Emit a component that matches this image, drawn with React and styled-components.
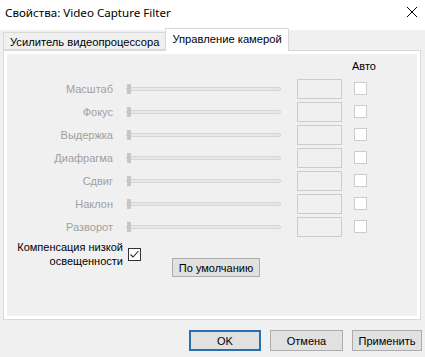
import React from 'react';
import styled, { createGlobalStyle } from 'styled-components';

const GlobalStyle = createGlobalStyle`
  html, body {
    margin: 0;
    padding: 0;
    background: #f0f0f0;
  }
  body {
    font-family: "Liberation Sans", Arial, sans-serif;
    font-size: 11px;
    color: #000;
  }
`;

const Dialog = styled.div`
  width: 425px;
  height: 357px;
  background: #f0f0f0;
  display: flex;
  flex-direction: column;
  overflow: hidden;
`;

const TitleBar = styled.div`
  height: 30px;
  background: #ffffff;
  display: flex;
  align-items: center;
  justify-content: space-between;
  padding: 0 6px 6px 5px;
  box-sizing: border-box;
  font-family: "Noto Sans", "Open Sans", sans-serif;
  font-size: 11.6px;
`;

const CloseBox = styled.div`
  width: 14px;
  height: 14px;
  display: flex;
  align-items: center;
  justify-content: center;
`;

const TabStrip = styled.div`
  height: 21px;
  display: flex;
  align-items: flex-end;
  padding-left: 3px;
  position: relative;
  z-index: 1;
  margin-bottom: -1px;
`;

const Tab = styled.div`
  box-sizing: border-box;
  height: ${p => (p.$active ? '23px' : '18px')};
  padding: ${p => (p.$active ? '4px 6px 0 6px' : '3px 6px 0 6px')};
  background: ${p => (p.$active ? '#ffffff' : '#f0f0f0')};
  border: 1px solid #d9d9d9;
  border-bottom: ${p => (p.$active ? 'none' : '1px solid #d9d9d9')};
  margin-left: ${p => (p.$active ? '-1px' : '0')};
  font-family: "Liberation Sans", Arial, sans-serif;
  font-size: 11.2px;
  line-height: 13px;
  white-space: nowrap;
  margin-bottom: ${p => (p.$active ? '0' : '1px')};
`;

const Panel = styled.div`
  margin: 0 4px 0 3px;
  height: 270px;
  box-sizing: border-box;
  border: 1px solid #d9d9d9;
  background: #ffffff;
  padding: 3px;
`;

const Page = styled.div`
  height: 100%;
  background: #f0f0f0;
  padding-top: 6px;
  box-sizing: border-box;
`;

const Grid = styled.div`
  display: grid;
  grid-template-columns: 106px 168px 61px 25px;
  grid-auto-rows: 23px;
  align-items: center;
  margin-top: 2px;
`;

const HeaderRow = styled.div`
  display: grid;
  grid-template-columns: 345px auto;
  height: 15px;
  line-height: 13px;
`;

const AutoTitle = styled.span`
  grid-column: 2;
`;

const Label = styled.div`
  text-align: right;
  color: #a0a0a0;
  white-space: nowrap;
`;

const Slider = styled.div`
  margin-left: 13px;
  width: 155px;
  height: 10px;
  position: relative;
  display: flex;
  align-items: center;
`;

const Track = styled.div`
  width: 100%;
  height: 4px;
  box-sizing: border-box;
  border: 1px solid #d6d6d6;
  border-radius: 2px;
  background: #e7e7e7;
`;

const Thumb = styled.div`
  position: absolute;
  left: 1px;
  top: 0;
  width: 4px;
  height: 10px;
  background: #c6c6c6;
`;

const Edit = styled.div`
  margin-left: 16px;
  width: 45px;
  height: 20px;
  box-sizing: border-box;
  border: 1px solid #cccccc;
  background: #f0f0f0;
`;

const Check = styled.div`
  margin-left: 12px;
  width: 13px;
  height: 13px;
  box-sizing: border-box;
  border: 1px solid ${p => (p.$enabled ? '#333333' : '#cccccc')};
  background: #ffffff;
  display: flex;
  align-items: center;
  justify-content: center;
`;

const CompRow = styled.div`
  display: flex;
  align-items: flex-start;
  margin-top: 2px;
`;

const CompLabel = styled.div`
  width: 116px;
  text-align: right;
  line-height: 14px;
`;

const CompCheck = styled(Check)`
  margin-left: 5px;
  margin-top: 8px;
`;

const Button = styled.button`
  box-sizing: border-box;
  font-family: "Liberation Sans", Arial, sans-serif;
  font-size: 11px;
  color: #000;
  background: #e1e1e1;
  border: ${p => (p.$default ? '2px solid #2a6fb0' : '1px solid #adadad')};
  padding: 0;
  height: ${p => p.$h || 21}px;
  width: ${p => p.$w}px;
  margin: 0;
`;

const DefaultsButton = styled(Button)`
  margin-left: 31px;
  margin-top: 18px;
`;

const Footer = styled.div`
  display: flex;
  justify-content: flex-end;
  gap: 9px;
  padding: 10px 3px 0 0;
`;

const rows = ['Масштаб', 'Фокус', 'Выдержка', 'Диафрагма', 'Сдвиг', 'Наклон', 'Разворот'];

export default function App() {
  return (
    <>
      <GlobalStyle />
      <Dialog>
        <TitleBar>
          <span>Свойства: Video Capture Filter</span>
          <CloseBox>
            <svg width="12" height="12" viewBox="0 0 12 12">
              <path d="M1 1L11 11M11 1L1 11" stroke="#000" strokeWidth="1" />
            </svg>
          </CloseBox>
        </TitleBar>
        <TabStrip>
          <Tab>Усилитель видеопроцессора</Tab>
          <Tab $active>Управление камерой</Tab>
        </TabStrip>
        <Panel>
          <Page>
            <HeaderRow>
              <AutoTitle>Авто</AutoTitle>
            </HeaderRow>
            <Grid>
              {rows.map(name => (
                <React.Fragment key={name}>
                  <Label>{name}</Label>
                  <Slider>
                    <Track />
                    <Thumb />
                  </Slider>
                  <Edit />
                  <Check />
                </React.Fragment>
              ))}
            </Grid>
            <CompRow>
              <CompLabel>
                Компенсация низкой
                <br />
                освещенности
              </CompLabel>
              <CompCheck $enabled>
                <svg width="11" height="11" viewBox="0 0 11 11">
                  <path d="M1.5 5.5L4 8L9.5 2" stroke="#222" strokeWidth="1.1" fill="none" />
                </svg>
              </CompCheck>
              <DefaultsButton $w={88} $h={19}>По умолчанию</DefaultsButton>
            </CompRow>
          </Page>
        </Panel>
        <Footer>
          <Button $default $w={72}>OK</Button>
          <Button $w={73}>Отмена</Button>
          <Button $w={70}>Применить</Button>
        </Footer>
      </Dialog>
    </>
  );
}
